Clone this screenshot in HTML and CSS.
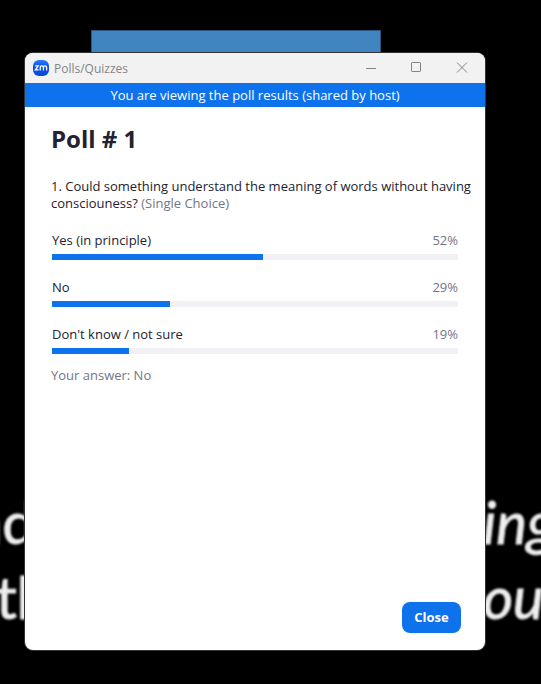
FILE: index.html
```html
<!DOCTYPE html>
<html lang="en">
<head>
<meta charset="utf-8">
<title>Polls/Quizzes</title>
<link rel="stylesheet" href="styles.css">
</head>
<body>
<div class="slide" aria-hidden="true">
  <div class="slide-banner"></div>
  <div class="slide-line first"><span>nd</span><em>ing</em></div>
  <div class="slide-line second"><span>th</span><em>ou</em></div>
</div>
<main class="window">
  <header class="titlebar">
    <svg class="logo" viewBox="0 0 16 16" aria-hidden="true">
      <defs><linearGradient id="zm" x1="0" y1="0" x2="0" y2="1"><stop offset="0" stop-color="#2a7bff"/><stop offset=".4" stop-color="#0b55e8"/><stop offset="1" stop-color="#0848d6"/></linearGradient></defs>
      <rect width="16" height="16" rx="6" fill="url(#zm)"/>
      <path d="M2.2 5.9h3L2.4 9.9h3.2M7.2 10.5V7.5q0-1.6 1.6-1.6t1.6 1.6v3M10.4 7.5q0-1.6 1.6-1.6t1.6 1.6v3" fill="none" stroke="#fff" stroke-width="1.3"/>
    </svg>
    <span class="title">Polls/Quizzes</span>
    <button class="control" type="button" aria-label="Minimize"><svg viewBox="0 0 12 12"><path d="M2 6.5h10"/></svg></button>
    <button class="control" type="button" aria-label="Maximize"><svg viewBox="0 0 12 12"><rect x="1.5" y=".5" width="9" height="9" rx=".6"/></svg></button>
    <button class="control" type="button" aria-label="Close window"><svg viewBox="0 0 12 12"><path d="M1 .5l10 10M11 .5L1 10.5"/></svg></button>
  </header>
  <p class="notice">You are viewing the poll results (shared by host)</p>
  <section class="poll">
    <h1>Poll # 1</h1>
    <p class="question">1. Could something understand the meaning of words without having consciouness? <span class="muted">(Single Choice)</span></p>
    <ul class="results">
      <li><div class="row"><span>Yes (in principle)</span><span class="muted">52%</span></div><div class="track"><div class="fill" style="width:52%"></div></div></li>
      <li><div class="row"><span>No</span><span class="muted">29%</span></div><div class="track"><div class="fill" style="width:29%"></div></div></li>
      <li><div class="row"><span>Don't know / not sure</span><span class="muted">19%</span></div><div class="track"><div class="fill" style="width:19%"></div></div></li>
    </ul>
    <p class="answer muted">Your answer: No</p>
  </section>
  <footer class="actions"><button class="close" type="button">Close</button></footer>
</main>
</body>
</html>
```
FILE: styles.css
```css
* { box-sizing: border-box; }
body {
  margin: 0;
  min-height: 100vh;
  display: flex;
  padding: 53px 56px 34px 25px;
  background: #000;
  color: #222230;
  font: 13px/17px "Open Sans", "Noto Sans", sans-serif;
}
h1, p, ul { margin: 0; padding: 0; }

.slide { position: absolute; inset: 0; overflow: hidden; }
.slide-banner {
  position: absolute;
  top: 30px;
  left: 91px;
  right: 160px;
  height: 60px;
  background: #4084c0;
  border: 1px solid #28567e;
}
.slide-line {
  position: absolute;
  left: -30px;
  right: 0;
  color: #eee;
  font: 58px/70px Lato, sans-serif;
  -webkit-text-stroke: 1px #eee;
  filter: blur(1px);
}
.slide-line em { position: absolute; left: 513px; }
.first { top: 487px; }
.second { top: 562px; }
.second span { margin-left: 26px; }

.window {
  position: relative;
  flex: 1;
  display: flex;
  flex-direction: column;
  background: #fff;
  border-radius: 8px;
  overflow: hidden;
  box-shadow: 0 0 0 1px #333;
}
.titlebar {
  display: flex;
  align-items: center;
  height: 30px;
  padding-left: 8px;
  background: #f2f2f2;
}
.logo { width: 16px; height: 16px; }
.title { flex: 1; margin-left: 5px; color: #858585; font-size: 12px; }
.control {
  width: 46px;
  height: 30px;
  padding: 0;
  border: 0;
  background: none;
  display: grid;
  place-items: center;
}
.control svg { width: 12px; height: 12px; fill: none; stroke: #858585; }
.notice {
  padding: 4px 0 3px;
  background: #0e72ed;
  color: #fff;
  text-align: center;
}
.poll { flex: 1; padding: 15px 27px 0 26px; }
h1 { font-size: 24px; line-height: 34px; }
.question { margin: 22px -16px 0 0; }
.muted { color: #747487; }
.results { list-style: none; margin: 20px 0 13px 1px; display: grid; gap: 19px; }
.row { display: flex; justify-content: space-between; }
.track { height: 6px; margin-top: 5px; background: #f0f0f5; }
.fill { height: 100%; background: #0e72ed; }
.actions { display: flex; justify-content: flex-end; padding: 0 24px 17px; }
.close {
  width: 59px;
  height: 31px;
  padding: 0;
  border: 0;
  border-radius: 8px;
  background: #0e72ed;
  color: #fff;
  font: bold 13px/17px "Open Sans", "Noto Sans", sans-serif;
}
```
